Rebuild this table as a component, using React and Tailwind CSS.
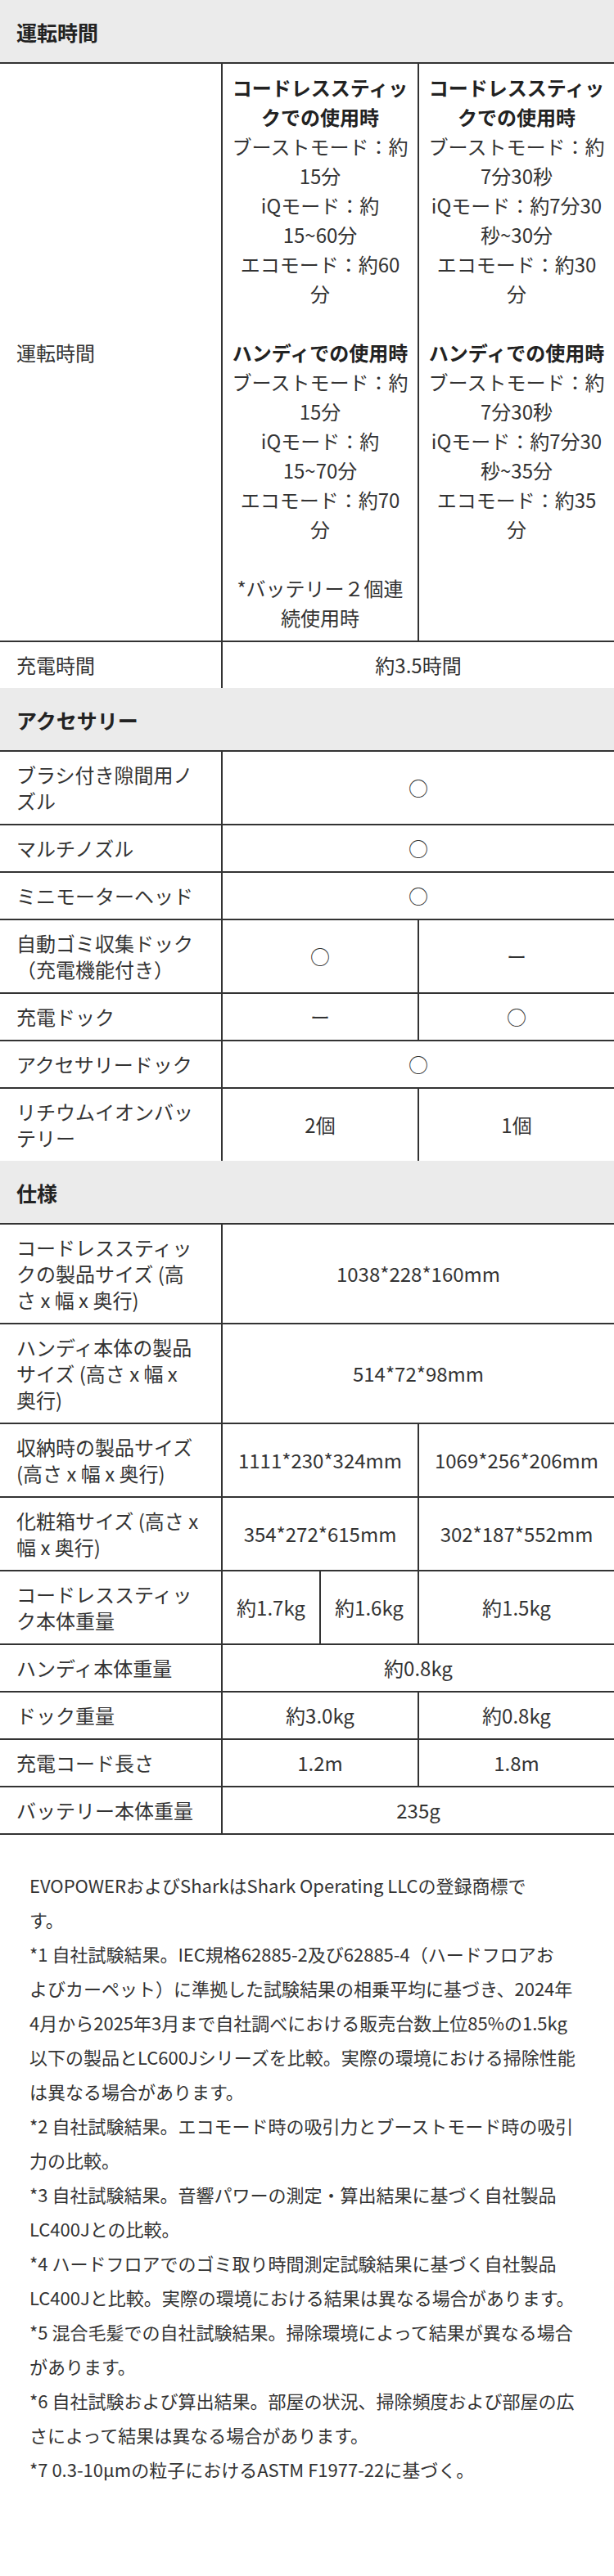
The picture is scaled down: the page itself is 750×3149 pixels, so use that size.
import React from "react";

const font = "font-['Noto_Sans_CJK_JP','Noto_Sans',sans-serif]";

const lines = (arr) =>
  arr.map((t, i) => (
    <React.Fragment key={i}>
      {i > 0 && <br />}
      {t}
    </React.Fragment>
  ));

const stickRuntime = [
  { bold: true, text: "コードレススティッ" },
  { bold: true, text: "クでの使用時" },
];

const colA = [
  ...stickRuntime,
  { text: "ブーストモード：約" },
  { text: "15分" },
  { text: "iQモード：約" },
  { text: "15~60分" },
  { text: "エコモード：約60" },
  { text: "分" },
  { text: "\u00a0" },
  { bold: true, text: "ハンディでの使用時" },
  { text: "ブーストモード：約" },
  { text: "15分" },
  { text: "iQモード：約" },
  { text: "15~70分" },
  { text: "エコモード：約70" },
  { text: "分" },
  { text: "\u00a0" },
  { text: "*バッテリー２個連" },
  { text: "続使用時" },
];

const colB = [
  ...stickRuntime,
  { text: "ブーストモード：約" },
  { text: "7分30秒" },
  { text: "iQモード：約7分30" },
  { text: "秒~30分" },
  { text: "エコモード：約30" },
  { text: "分" },
  { text: "\u00a0" },
  { bold: true, text: "ハンディでの使用時" },
  { text: "ブーストモード：約" },
  { text: "7分30秒" },
  { text: "iQモード：約7分30" },
  { text: "秒~35分" },
  { text: "エコモード：約35" },
  { text: "分" },
];

const sections = [
  {
    title: "運転時間",
    rows: [
      { label: ["運転時間"], runtime: true },
      { label: ["充電時間"], cells: [{ span: 3, v: "約3.5時間" }] },
    ],
  },
  {
    title: "アクセサリー",
    rows: [
      { label: ["ブラシ付き隙間用ノ", "ズル"], cells: [{ span: 3, v: "○" }] },
      { label: ["マルチノズル"], cells: [{ span: 3, v: "○" }] },
      { label: ["ミニモーターヘッド"], cells: [{ span: 3, v: "○" }] },
      {
        label: ["自動ゴミ収集ドック", "（充電機能付き）"],
        cells: [
          { span: 2, v: "○" },
          { span: 1, v: "ー" },
        ],
      },
      {
        label: ["充電ドック"],
        cells: [
          { span: 2, v: "ー" },
          { span: 1, v: "○" },
        ],
      },
      { label: ["アクセサリードック"], cells: [{ span: 3, v: "○" }] },
      {
        label: ["リチウムイオンバッ", "テリー"],
        cells: [
          { span: 2, v: "2個" },
          { span: 1, v: "1個" },
        ],
      },
    ],
  },
  {
    title: "仕様",
    rows: [
      {
        label: ["コードレススティッ", "クの製品サイズ (高", "さ x 幅 x 奥行)"],
        cells: [{ span: 3, v: "1038*228*160mm" }],
      },
      {
        label: ["ハンディ本体の製品", "サイズ  (高さ x 幅 x", "奥行)"],
        cells: [{ span: 3, v: "514*72*98mm" }],
      },
      {
        label: ["収納時の製品サイズ", "(高さ x 幅 x 奥行)"],
        cells: [
          { span: 2, v: "1111*230*324mm" },
          { span: 1, v: "1069*256*206mm" },
        ],
      },
      {
        label: ["化粧箱サイズ (高さ x", "幅 x 奥行)"],
        cells: [
          { span: 2, v: "354*272*615mm" },
          { span: 1, v: "302*187*552mm" },
        ],
      },
      {
        label: ["コードレススティッ", "ク本体重量"],
        cells: [
          { span: 1, v: "約1.7kg" },
          { span: 1, v: "約1.6kg" },
          { span: 1, v: "約1.5kg" },
        ],
      },
      { label: ["ハンディ本体重量"], cells: [{ span: 3, v: "約0.8kg" }] },
      {
        label: ["ドック重量"],
        cells: [
          { span: 2, v: "約3.0kg" },
          { span: 1, v: "約0.8kg" },
        ],
      },
      {
        label: ["充電コード長さ"],
        cells: [
          { span: 2, v: "1.2m" },
          { span: 1, v: "1.8m" },
        ],
      },
      { label: ["バッテリー本体重量"], cells: [{ span: 3, v: "235g" }], last: true },
    ],
  },
];

const notes = [
  ["EVOPOWERおよびSharkはShark Operating LLCの登録商標で", "す。"],
  [
    "*1 自社試験結果。IEC規格62885-2及び62885-4（ハードフロアお",
    "よびカーペット）に準拠した試験結果の相乗平均に基づき、2024年",
    "4月から2025年3月まで自社調べにおける販売台数上位85%の1.5kg",
    "以下の製品とLC600Jシリーズを比較。実際の環境における掃除性能",
    "は異なる場合があります。",
  ],
  ["*2 自社試験結果。エコモード時の吸引力とブーストモード時の吸引", "力の比較。"],
  ["*3 自社試験結果。音響パワーの測定・算出結果に基づく自社製品", "LC400Jとの比較。"],
  [
    "*4 ハードフロアでのゴミ取り時間測定試験結果に基づく自社製品",
    "LC400Jと比較。実際の環境における結果は異なる場合があります。",
  ],
  ["*5 混合毛髪での自社試験結果。掃除環境によって結果が異なる場合", "があります。"],
  ["*6 自社試験および算出結果。部屋の状況、掃除頻度および部屋の広", "さによって結果は異なる場合があります。"],
  ["*7 0.3-10μmの粒子におけるASTM F1977-22に基づく。"],
];

function RuntimeCell({ items, span }) {
  return (
    <td
      colSpan={span}
      className="border-t-2 border-l-2 border-[#333] px-2 pt-[11px] pb-[10px] text-center align-top leading-[36px]"
    >
      {items.map((it, i) => (
        <div key={i} className={it.bold ? "font-bold text-[#222]" : ""}>
          {it.text}
        </div>
      ))}
    </td>
  );
}

function Row({ row }) {
  const bottom = row.last ? " border-b-2" : "";
  return (
    <tr>
      <td
        className={
          "border-t-2 border-[#333] py-3 pl-5 pr-3 text-left align-middle leading-[32px]" + bottom
        }
      >
        {lines(row.label)}
      </td>
      {row.runtime ? (
        <>
          <RuntimeCell items={colA} span={2} />
          <RuntimeCell items={colB} span={1} />
        </>
      ) : (
        row.cells.map((c, i) => (
          <td
            key={i}
            colSpan={c.span}
            className={
              "border-t-2 border-l-2 border-[#333] px-1 py-3 text-center align-middle leading-[32px] whitespace-nowrap" +
              bottom
            }
          >
            {c.v}
          </td>
        ))
      )}
    </tr>
  );
}

export default function App() {
  return (
    <div className={`${font} w-[750px] bg-white pb-[110px] text-[#333]`}>
      <table className="w-full table-fixed border-separate border-spacing-0 text-[24px]">
        <colgroup>
          <col className="w-[270px]" />
          <col className="w-[120px]" />
          <col className="w-[120px]" />
          <col className="w-[240px]" />
        </colgroup>
        <tbody>
          {sections.map((s) => (
            <React.Fragment key={s.title}>
              <tr>
                <th
                  colSpan={4}
                  className="h-[76px] bg-[#ebebeb] pl-5 pt-1 text-left align-middle text-[25px] font-bold text-[#222]"
                >
                  {s.title}
                </th>
              </tr>
              {s.rows.map((r, i) => (
                <Row key={i} row={r} />
              ))}
            </React.Fragment>
          ))}
        </tbody>
      </table>

      <div className="mt-10 pl-[36px] pr-3 text-[22px] leading-[42px] whitespace-nowrap">
        {notes.map((n, i) => (
          <p key={i}>{lines(n)}</p>
        ))}
      </div>
    </div>
  );
}
